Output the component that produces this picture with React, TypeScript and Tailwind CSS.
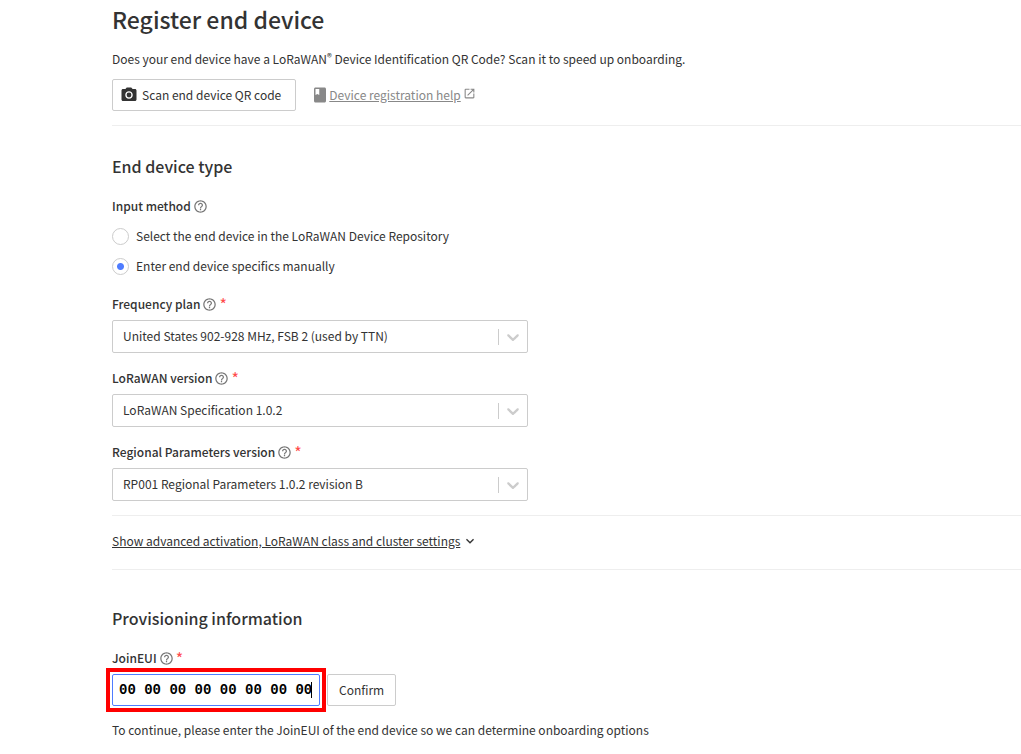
import { useState } from "react";
import {
    MdBook,
    MdExpandMore,
    MdHelpOutline,
    MdOpenInNew,
    MdPhotoCamera,
} from "react-icons/md";

interface FieldLabelProps{
    text: string,
    htmlFor?: string,
    required?: boolean
}

interface SelectFieldProps{
    id: string,
    label: string,
    options: string[]
}

const Chevron: React.FC = () =>(
    <svg width="20" height="20" viewBox="0 0 20 20" fill="currentColor" aria-hidden="true">
        <path d="M4.516 7.548c0.436-0.446 1.043-0.481 1.576 0l3.908 3.747 3.908-3.747c0.533-0.481 1.141-0.446 1.574 0 0.436 0.445 0.408 1.197 0 1.615-0.406 0.418-4.695 4.502-4.695 4.502-0.217 0.223-0.502 0.335-0.787 0.335s-0.57-0.112-0.789-0.335c0 0-4.287-4.084-4.695-4.502s-0.436-1.17 0-1.615z"/>
    </svg>
)

const FieldLabel: React.FC<FieldLabelProps> = ({text, htmlFor, required}) =>{
return(
    <div className="flex items-center leading-5">
        <label htmlFor={htmlFor} className="font-medium">{text}</label>
        <MdHelpOutline size={15} className="ml-0.5 text-[#777]"/>
        {required && <span className="ml-0.5 text-base leading-5 text-[#ff4b4b]">*</span>}
    </div>
)
}

const SelectField: React.FC<SelectFieldProps> = ({id, label, options}) =>{
return(
    <div className="mt-[15px]">
        <FieldLabel text={label} htmlFor={id} required/>
        <div className="relative mt-1.5 max-w-[416px]">
            <select id={id} className="block h-[33px] w-full appearance-none rounded-xs border border-[#ccc] bg-white pr-10 pb-0.5 pl-2.5 text-xs text-[#333]">
                {options.map((option)=><option key={option}>{option}</option>)}
            </select>
            <div className="pointer-events-none absolute inset-y-0 right-0 flex items-center pr-[5px] text-[#ccc]">
                <div className="mr-1 h-4 w-px bg-[#ccc]"/>
                <Chevron/>
            </div>
        </div>
    </div>
)
}

export default function App(){
    const [method, setMethod] = useState("manual");
    const [joinEui, setJoinEui] = useState("00 00 00 00 00 00 00 00");

    const methods = [
        {value: "repository", text: "Select the end device in the LoRaWAN Device Repository"},
        {value: "manual", text: "Enter end device specifics manually"},
    ];

return(
    <main className="bg-white pb-3 pl-28 font-['Noto_Sans_CJK_SC',sans-serif] text-xs leading-5 text-[#333]">
        <h1 className="text-[23px] leading-[38px] font-medium">Register end device</h1>
        <p className="mt-[11px]">
            Does your end device have a LoRaWAN<sup className="top-0 align-[3px] text-[10px] leading-none">®</sup> Device Identification QR Code? Scan it to speed up onboarding.
        </p>
        <div className="mt-2.5 flex items-center">
            <button className="flex h-8 items-center rounded-xs border border-[#ccc] pr-3.5 pl-[7px]">
                <MdPhotoCamera size={18}/>
                <span className="ml-1">Scan end device QR code</span>
            </button>
            <a href="#help" className="ml-[15px] flex items-center text-[#888]">
                <MdBook size={18}/>
                <span className="underline">Device registration help</span>
                <MdOpenInNew size={13} className="mb-1 ml-0.5"/>
            </a>
        </div>
        <hr className="mt-3.5 border-[#eee]"/>

        <h2 className="mt-7 text-base leading-6 font-medium">End device type</h2>
        <div className="mt-[18px]">
            <FieldLabel text="Input method"/>
        </div>
        <div className="mb-[18px]">
            {methods.map(({value, text})=>(
                <label key={value} className="mt-2.5 flex items-center">
                    <input
                        type="radio"
                        name="method"
                        checked={method === value}
                        onChange={()=>setMethod(value)}
                        className="mr-[7px] size-[17px] appearance-none rounded-full border border-[#ccc] bg-white checked:bg-[radial-gradient(circle,#4f7cff_3px,transparent_4px)]"
                    />
                    {text}
                </label>
            ))}
        </div>
        <SelectField id="frequency" label="Frequency plan" options={["United States 902-928 MHz, FSB 2 (used by TTN)"]}/>
        <SelectField id="lorawan" label="LoRaWAN version" options={["LoRaWAN Specification 1.0.2"]}/>
        <SelectField id="regional" label="Regional Parameters version" options={["RP001 Regional Parameters 1.0.2 revision B"]}/>

        <hr className="mt-3.5 border-[#eee]"/>
        <button className="mt-[15px] flex items-center">
            <span className="underline">Show advanced activation, LoRaWAN class and cluster settings</span>
            <MdExpandMore size={16} className="ml-0.5"/>
        </button>
        <hr className="mt-[18px] border-[#eee]"/>

        <h2 className="mt-9 text-base leading-6 font-medium">Provisioning information</h2>
        <div className="mt-[18px]">
            <FieldLabel text="JoinEUI" htmlFor="joineui" required/>
        </div>
        <div className="mt-1.5 flex items-center">
            <div className="relative w-52 outline-4 outline-offset-2 outline-[#ff0000]">
                <input
                    id="joineui"
                    value={joinEui}
                    onChange={(e)=>setJoinEui(e.target.value)}
                    className="block h-8 w-full rounded-xs border border-[#4f7cff] px-1.5 font-['Liberation_Mono',monospace] text-sm font-bold text-black outline-none"
                />
                {/* text cursor */}
                <span className="absolute top-2 right-2 h-4 w-px bg-black"/>
            </div>
            <button className="ml-[7px] h-8 rounded-xs border border-[#ccc] px-[11px]">Confirm</button>
        </div>
        <p className="mt-3.5">To continue, please enter the JoinEUI of the end device so we can determine onboarding options</p>
    </main>
)
}
